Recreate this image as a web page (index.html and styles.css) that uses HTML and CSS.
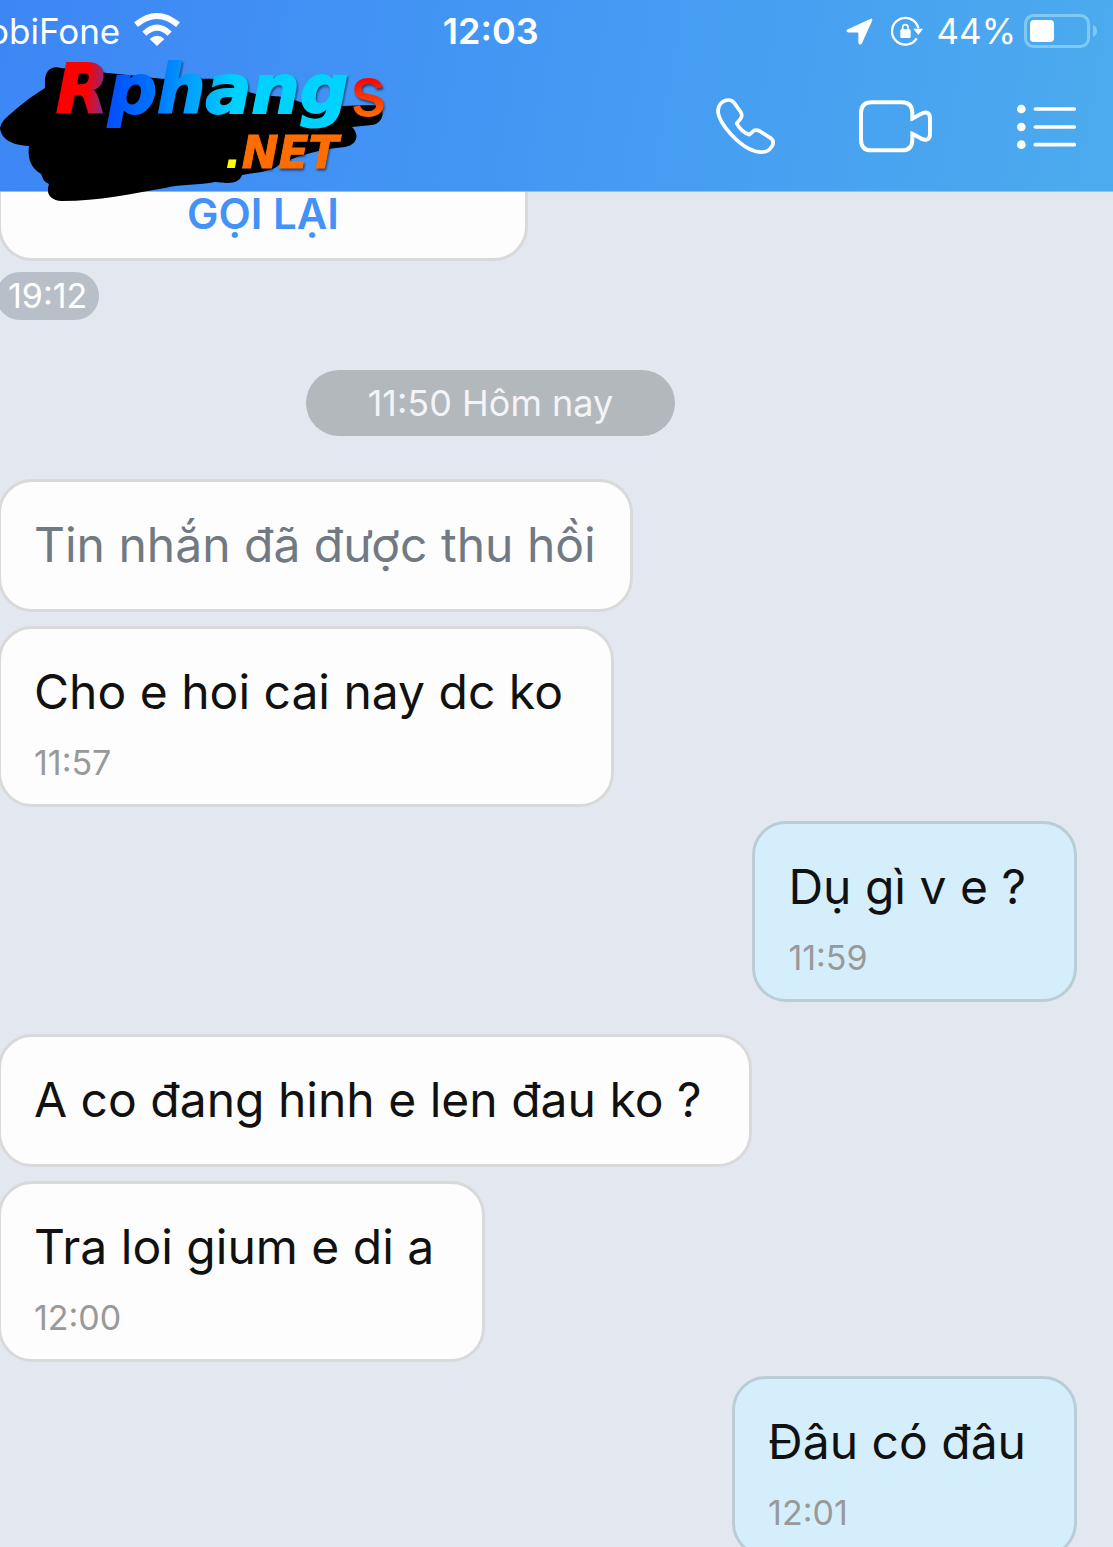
FILE: index.html
```html
<!DOCTYPE html>
<html lang="vi">
<head>
<meta charset="utf-8">
<meta name="viewport" content="width=device-width, initial-scale=1">
<title>Chat</title>
<link rel="stylesheet" href="styles.css">
</head>
<body>
<div class="screen">
  <header class="header">
    <div class="status">
      <div class="status-left">
        <span class="carrier">obiFone</span>
        <svg class="wifi" viewBox="402 36 138 102" width="46" height="34" aria-hidden="true">
          <g fill="none" stroke="#fff" stroke-width="18">
            <path d="M408 74Q471 22 534 74"/>
            <path d="M433 101Q471 65 509 101"/>
          </g>
          <path fill="#fff" d="M471 138L449 117Q471 97 493 117Z"/>
        </svg>
      </div>
      <time class="clock">12:03</time>
      <div class="status-right">
        <svg viewBox="50 52 81 82" width="27" height="27" aria-hidden="true"><path fill="#fff" d="M125 54Q131 53 129 60L98 129Q95 134 90 132Q87 131 87 126V98Q87 96 85 96H56Q50 95 51 90Q52 87 55 86Z"/></svg>
        <svg viewBox="185 50 96 90" width="32" height="30" aria-hidden="true">
          <path fill="none" stroke="#fff" stroke-width="7" d="M262 117A40 40 0 1 1 267 87"/>
          <path fill="#fff" d="M252 88H281L267 107Z"/>
          <rect x="213" y="90" width="31" height="26" rx="4" fill="#fff"/>
          <path fill="none" stroke="#fff" stroke-width="5" d="M220 92V84Q220 76 228 76Q236 76 236 84V92"/>
        </svg>
        <span class="level">44%</span>
        <svg class="battery" viewBox="0 0 73 36" width="73" height="36" aria-hidden="true">
          <rect x="1.5" y="2.5" width="63" height="31" rx="8" fill="none" stroke="#80c9f5" stroke-width="3"/>
          <rect x="6" y="7" width="24" height="22" rx="4" fill="#fff"/>
          <path fill="#80c9f5" d="M69 12Q73 14 73 18Q73 22 69 24Z"/>
        </svg>
      </div>
    </div>
    <nav class="actions">
      <button class="icon-button" type="button" aria-label="Gọi thoại">
        <svg viewBox="47 53 177 171" width="59" height="57"><path fill="none" stroke="#fff" stroke-width="11" stroke-linejoin="round" d="M85 59C66 59 52 74 53 95C57 130 115 198 165 213C190 219 205 215 214 199C221 188 220 180 212 174L184 156C174 149 166 147 158 153L147 163C132 158 117 144 109 129L119 117C126 110 126 103 121 95L101 67C96 61 91 59 85 59Z"/></svg>
      </button>
      <button class="icon-button" type="button" aria-label="Gọi video">
        <svg viewBox="477 59 222 159" width="74" height="53"><path fill="none" stroke="#fff" stroke-width="12" d="M637 115V98Q637 66 605 66H515Q483 66 483 98V178Q483 210 515 210H605Q637 210 637 178V160L662 174Q690 187 690 160V115Q690 88 662 101Z" clip-path="url(#camera)"/><defs><clipPath id="camera"><path d="M470 50H700V220H470Z"/></clipPath></defs><path stroke="#4aa5f0" stroke-width="13" d="M637 122V153"/></svg>
      </button>
      <button class="icon-button" type="button" aria-label="Tùy chọn">
        <svg viewBox="953 69 180 138" width="60" height="46"><g fill="#fff"><circle cx="966" cy="84" r="13"/><circle cx="966" cy="138" r="13"/><circle cx="966" cy="191" r="13"/></g><path stroke="#fff" stroke-width="11" stroke-linecap="round" d="M1008 84H1125M1008 138H1125M1008 191H1125"/></svg>
      </button>
    </nav>
    <svg class="logo" viewBox="0 0 400 210" width="400" height="210">
      <defs>
        <linearGradient id="word" gradientUnits="userSpaceOnUse" x1="56" y1="60" x2="350" y2="90">
          <stop offset="0" stop-color="#f00"/><stop offset=".11" stop-color="#f00"/>
          <stop offset=".18" stop-color="#7a3090"/><stop offset=".2" stop-color="#0050ff"/>
          <stop offset=".34" stop-color="#0074ff"/><stop offset=".46" stop-color="#00a0ff"/>
          <stop offset=".62" stop-color="#00d2ff"/><stop offset="1" stop-color="#00d2ff"/>
        </linearGradient>
        <linearGradient id="tail" x1="0" y1="0" x2="0" y2="1">
          <stop offset=".35" stop-color="#f00"/><stop offset=".8" stop-color="#ff6a00"/>
        </linearGradient>
      </defs>
      <path d="M45 84C44 70 52 65 61 68C85 70 103 73 140 76C175 82 195 78 215 79C236 84 245 95 272 96C292 97 303 103 310 107L372 105C386 105 386 122 372 125L352 127C360 135 357 145 345 147C320 149 300 155 280 164C274 171 260 172 242 175C239 183 232 184 215 182C200 185 180 184 165 188C130 194 100 201 62 201C49 200 46 193 49 184C42 181 43 177 41 174C28 166 28 154 29 146C10 145 1 138 0 128C2 119 10 115 16 109Q30 97 45 88Z"/>
      <g class="logo-shadow">
        <text class="logo-word" x="56" y="113" fill="url(#word)" stroke="url(#word)">Rphang</text>
        <text class="logo-tail" x="350" y="116" fill="url(#tail)">s</text>
        <text class="logo-net" x="225" y="168" fill="#ff6d00"><tspan fill="#ff0">.</tspan><tspan stroke="#ff6d00">NET</tspan></text>
      </g>
    </svg>
  </header>

  <main class="chat">
    <div class="call-card"><button class="call-back" type="button">GỌI LẠI</button></div>
    <time class="chip">19:12</time>
    <time class="day">11:50 Hôm nay</time>
    <article class="bubble recalled"><p>Tin nhắn đã được thu hồi</p></article>
    <article class="bubble"><p>Cho e hoi cai nay dc ko</p><time>11:57</time></article>
    <article class="bubble mine"><p>Dụ gì v e ?</p><time>11:59</time></article>
    <article class="bubble reply"><p>A co đang hinh e len đau ko ?</p></article>
    <article class="bubble"><p>Tra loi gium e di a</p><time>12:00</time></article>
    <article class="bubble mine"><p>Đâu có đâu</p><time>12:01</time></article>
  </main>
</div>
</body>
</html>
```
FILE: styles.css
```css
* { box-sizing: border-box; }

body {
  margin: 0;
  background: #e2e7f0;
  font-family: Inter, "Liberation Sans", sans-serif;
  color: #111;
}

p { margin: 0; }
svg { display: block; flex: none; }

.screen {
  display: flex;
  flex-direction: column;
  height: 100vh;
  overflow: hidden;
}

.header {
  position: relative;
  z-index: 1;
  flex: none;
  color: #fff;
  background: linear-gradient(100deg, #3d86f6, #4499f3 50%, #4cabee);
  border-bottom: 1px solid #a9b9d2;
}

.status {
  display: grid;
  grid-template-columns: 40% auto 1fr;
  column-gap: 4px;
  align-items: center;
  height: 62px;
  padding-right: 16px;
  font-size: 35px;
}

.status-left,
.status-right {
  display: flex;
  align-items: center;
}

.status-left { gap: 14px; margin-left: -12px; }
.wifi { margin-bottom: 4px; }
.clock { font-size: 36px; font-weight: 600; }
.status-right { justify-content: flex-end; gap: 18px; }
.level { margin: 0 -10px 0 -5px; }

.actions {
  display: flex;
  align-items: center;
  justify-content: flex-end;
  gap: 84px;
  height: 129px;
  padding-right: 36px;
}

.icon-button {
  padding: 0;
  border: 0;
  background: none;
}

/* The scribble and wordmark lie over the header and the first card. */
.logo {
  position: absolute;
  top: 0;
  left: 0;
  pointer-events: none;
}

.logo-shadow { filter: drop-shadow(1px 2px 1px #0008); }
.logo-word { font: italic bold 68px "DejaVu Sans", sans-serif; stroke-width: 2px; }
.logo-tail { font: 500 68px Inter, sans-serif; }
.logo-net { font: italic bold 44px "DejaVu Sans", sans-serif; }

.chat {
  display: flex;
  flex: 1;
  flex-direction: column;
  align-items: flex-start;
  min-height: 0;
  padding-right: 36px;
  overflow: hidden;
}

.chat > * { flex: none; }

.call-card {
  width: 530px;
  margin-left: -2px;
  padding-bottom: 22px;
  background: #fdfdfd;
  border: 3px solid #d9d9d9;
  border-top: 0;
  border-radius: 0 0 34px 34px;
}

.call-back {
  display: block;
  width: 100%;
  padding: 0;
  border: 0;
  background: none;
  color: #4592f7;
  font: 600 42px/44px Inter, sans-serif;
}

.chip {
  margin: 11px 0 50px -4px;
  padding: 0 12px;
  border-radius: 24px;
  background: #b8bfc8;
  color: #fff;
  font-size: 34px;
  line-height: 48px;
}

.day {
  align-self: center;
  margin: 0 96px 43px 0;
  padding: 0 62px;
  border-radius: 33px;
  background: #b3b8bc;
  color: #f3f4f8;
  font-size: 36px;
  line-height: 66px;
}

.bubble {
  margin: 0 0 14px -2px;
  padding: 33px 48px 21px 33px;
  background: #fdfdfd;
  border: 3px solid #d9d9d9;
  border-radius: 34px;
  font-size: 48px;
  line-height: 60px;
}

.bubble time {
  display: block;
  margin-top: 21px;
  color: #999;
  font-size: 34px;
  line-height: 40px;
}

.recalled {
  padding-right: 34px;
  padding-bottom: 34px;
  color: #717982;
}

.reply {
  margin-top: 18px;
  padding-bottom: 34px;
}

.mine {
  align-self: flex-end;
  background: #d5eefc;
  border-color: #bacdd6;
}
```
